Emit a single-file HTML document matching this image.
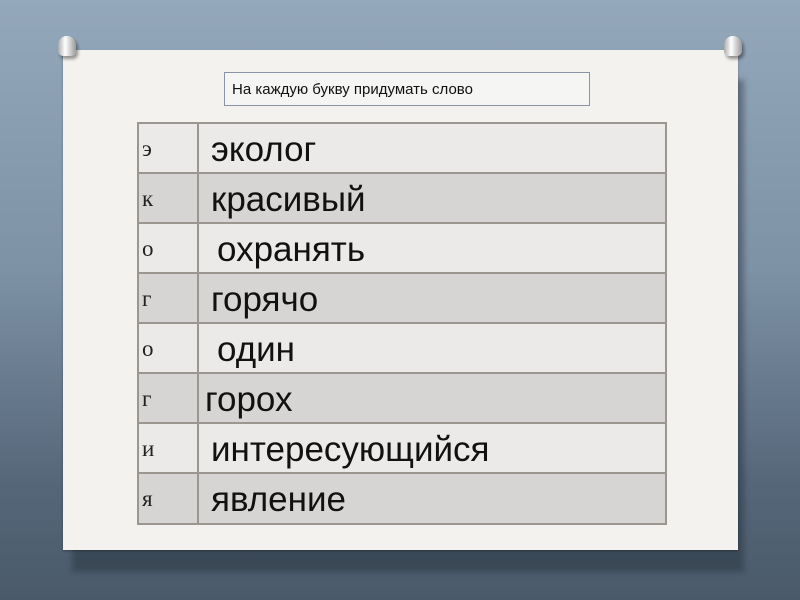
<!DOCTYPE html><html><head><style>
body{margin:0;width:800px;height:600px;overflow:hidden;background:linear-gradient(180deg,#93a8ba 0%,#7d92a5 45%,#56677a 80%,#4a5a6a 100%);position:relative;font-family:"Liberation Sans",sans-serif}
.shadow{position:absolute;left:72px;top:80px;width:672px;height:492px;background:rgba(30,40,50,.4);filter:blur(3px)}
.paper{position:absolute;left:63px;top:50px;width:675px;height:500px;background:#f3f2ef;box-shadow:0 1px 2px rgba(0,0,0,.3)}
.hdr{position:absolute;left:224px;top:72px;width:366px;height:34px;border:1px solid #8a93a8;background:#f5f5f3;font-size:15px;line-height:33px;box-sizing:border-box;padding-left:7px;color:#111}
.tbl{position:absolute;left:137px;top:122px;width:530px;height:403px;box-sizing:border-box;border:2px solid #9b968f;background:#9b968f}
.row{position:absolute;left:0;width:526px;height:48px;overflow:hidden}
.row.o{background:#ebeae8}.row.e{background:#d6d5d3}
.l{position:absolute;left:3px;top:0;line-height:50px;font-family:"Liberation Serif",serif;font-size:23px;color:#222}
.r{position:absolute;left:72px;top:0;line-height:52px;font-size:35px;color:#111;white-space:nowrap}
.div{position:absolute;left:58px;top:0;width:2px;height:399px;background:#9b968f}
.pin{position:absolute;width:18px;height:20px;border-radius:9px 9px 5px 5px;background:linear-gradient(90deg,#aaa,#fff 40%,#999);box-shadow:2px 3px 3px rgba(0,0,0,.4)}
</style></head><body>
<div class="shadow"></div><div class="paper"></div>
<div class="pin" style="left:58px;top:36px"></div><div class="pin" style="left:724px;top:36px"></div>
<div class="hdr">На каждую букву придумать слово</div>
<div class="tbl">
<div class="row o" style="top:0"><span class="l">э</span><span class="r">эколог</span></div>
<div class="row e" style="top:50px"><span class="l">к</span><span class="r">красивый</span></div>
<div class="row o" style="top:100px"><span class="l">о</span><span class="r" style="left:78px">охранять</span></div>
<div class="row e" style="top:150px"><span class="l">г</span><span class="r">горячо</span></div>
<div class="row o" style="top:200px"><span class="l">о</span><span class="r" style="left:78px">один</span></div>
<div class="row e" style="top:250px"><span class="l">г</span><span class="r" style="left:66px">горох</span></div>
<div class="row o" style="top:300px"><span class="l">и</span><span class="r">интересующийся</span></div>
<div class="row e" style="top:350px;height:49px"><span class="l">я</span><span class="r">явление</span></div>
<div class="div"></div>
</div>
</body></html>
